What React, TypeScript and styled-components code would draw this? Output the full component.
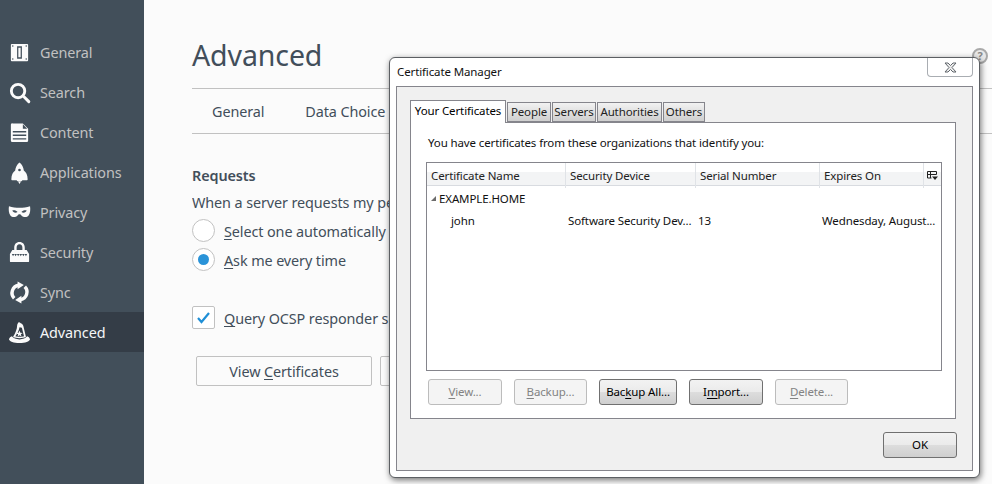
import { ReactNode } from 'react'
import styled, { createGlobalStyle } from 'styled-components'

const UI_FONT = `"Noto Sans", "Open Sans", "Liberation Sans", sans-serif`

const GlobalStyle = createGlobalStyle`
    html, body {
        margin: 0;
        padding: 0;
        background: #fbfbfb;
        font-family: ${UI_FONT};
    }
`

const icons: Record<string, ReactNode> = {
    General: (
        <path
            fillRule="evenodd"
            d="M4 3h16a1 1 0 0 1 1 1v16a1 1 0 0 1-1 1H4a1 1 0 0 1-1-1V4a1 1 0 0 1 1-1zm5.500 2.500v13h5v-13h-5zm1.300 1.500h2.400v10h-2.400V7zM5 4.500a.8.8 0 1 0 0 1.600.8.8 0 0 0 0-1.600zm14 0a.8.8 0 1 0 0 1.600.8.8 0 0 0 0-1.600zM5 18a.8.8 0 1 0 0 1.600.8.8 0 0 0 0-1.600zm14 0a.8.8 0 1 0 0 1.600.8.8 0 0 0 0-1.600z"
        />
    ),
    Search: (
        <>
            <circle cx="10.500" cy="10.500" r="7" fill="none" stroke="currentColor" strokeWidth="3" />
            <path d="M15 17l2.200-2.200 5.600 5.600a1.500 1.500 0 0 1-2.200 2.200z" />
        </>
    ),
    Content: (
        <path
            fillRule="evenodd"
            d="M5 2.500h10.500L21 8v12.500a1.500 1.500 0 0 1-1.500 1.500h-15A1.500 1.500 0 0 1 3 20.500V4A1.500 1.500 0 0 1 5 2.500zM15.500 3.500V8H20zM5 10.500v1.500h14v-1.500zm0 3.700v1.500h14v-1.500zm0 3.700v1.500h14v-1.500z"
        />
    ),
    Applications: (
        <path
            fillRule="evenodd"
            d="M12 1.500c2.500 2 4.200 5 4.500 8.500 2.300 1.700 4 4.500 4 9 0 .7-.4 1-1 1h-4.500l-.8 1H9.800l-.8-1H4.500c-.6 0-1-.3-1-1 0-4.500 1.700-7.300 4-9C7.800 6.500 9.500 3.500 12 1.500zm0 6.500a1.400 1.400 0 1 0 0 2.800 1.400 1.400 0 0 0 0-2.800zM10.500 21.500h3L12 24z"
        />
    ),
    Privacy: (
        <path
            fillRule="evenodd"
            d="M1 5.500c3.500 1.300 7.500 1.500 11 1.500s7.500-.2 11-1.500c.5 3.500.3 7-1.500 9.500-2 2.500-5.500 2-7.500 0-1-1-1-1.200-2-1.200s-1 .2-2 1.200c-2 2-5.500 2.500-7.500 0C.7 12.500.5 9 1 5.500zM4.500 10c.5 2 3.500 3 5.500 1.500C8.500 9.500 6 9.300 4.500 10zm15 0c-1.500-.7-4-.5-5.500 1.500 2 1.500 5 .5 5.500-1.500z"
        />
    ),
    Security: (
        <path
            fillRule="evenodd"
            d="M12 1c3.500 0 5.500 2.500 5.500 6v2.500h2L22 13.500V21c0 .6-.4 1-1 1H3c-.6 0-1-.4-1-1v-7.500l2.500-4h2V7c0-3.500 2-6 5.500-6zm0 2.500c-2 0-3 1.500-3 3.500v2.500h6V7c0-2-1-3.500-3-3.500zM4 13.500l1.300 2.500 1.300-2.500 1.300 2.500 1.400-2.500 1.300 2.500 1.400-2.500 1.300 2.500 1.400-2.500 1.300 2.500 1.400-2.500 1.300 2.500 1.300-2.500h-16z"
        />
    ),
    Sync: (
        <>
            <path d="M11 4.500A8 8 0 0 0 6.500 18" fill="none" stroke="currentColor" strokeWidth="3.600" />
            <path d="M13 19.500A8 8 0 0 0 17.500 6" fill="none" stroke="currentColor" strokeWidth="3.600" />
            <path d="M10 .5l6.500 3.700-6.500 4.300zM14 15.500l-6.500 4.300 6.500 3.700z" />
        </>
    ),
    Advanced: (
        <path
            fillRule="evenodd"
            d="M11.500 1c1.200 1.300 4 1.500 4.500 4.200l2.700 11.300c-1.800 1-3.900 1.500-6.700 1.500s-5-.5-6.700-1.500C7.800 13 9.500 8 9.500 5c0-1.700.8-3 2-4zm.5 5.500c-.5 3-2 6.500-4.300 9.300 1.300.5 2.700.7 4.300.7s3.200-.2 4.700-.7L14.500 7c-.7-.2-1.700-.3-2.500-.5zm0 3.500l.9 2.300 2.400.1-1.900 1.500.7 2.400-2.100-1.400-2.100 1.400.7-2.400-1.900-1.500 2.400-.1zM1 19c.5-1.500 1.700-2.500 3-3 1.500 2 4.500 3.200 8 3.200s6.500-1.200 8-3.200c1.300.5 2.500 1.500 3 3-.5 2.500-5 4-11 4s-10.500-1.500-11-4z"
        />
    ),
}

const sections = ['General', 'Search', 'Content', 'Applications', 'Privacy', 'Security', 'Sync', 'Advanced']

const columns = [
    { name: 'Certificate Name' },
    { name: 'Security Device' },
    { name: 'Serial Number' },
    { name: 'Expires On' },
]

const certTabs = [
    { name: 'Your Certificates', width: 96 },
    { name: 'People', width: 44 },
    { name: 'Servers', width: 44 },
    { name: 'Authorities', width: 65 },
    { name: 'Others', width: 42 },
]

export default function App() {
    return (
        <Page>
            <GlobalStyle />
            <Sidebar>
                {sections.map((name) => (
                    <NavItem key={name} $active={name === 'Advanced'}>
                        <NavIcon viewBox="0 0 24 24" fill="currentColor">{icons[name]}</NavIcon>
                        {name}
                    </NavItem>
                ))}
            </Sidebar>

            <Main>
                <Title>Advanced</Title>
                <PrefTabs>
                    <TabsClip>
                        <PrefTab>General</PrefTab>
                        <PrefTab>Data Choice</PrefTab>
                    </TabsClip>
                </PrefTabs>
                <Heading>Requests</Heading>
                <Description>When a server requests my pe</Description>
                <OptionRow>
                    <Radio />
                    <OptionLabel><Key>S</Key>elect one automatically</OptionLabel>
                </OptionRow>
                <OptionRow>
                    <Radio $checked />
                    <OptionLabel><Key>A</Key>sk me every time</OptionLabel>
                </OptionRow>
                <CheckRow>
                    <CheckBox>
                        <svg width="15" height="13" viewBox="0 0 15 13">
                            <path d="M2 7l3.500 4L13 2" fill="none" stroke="#1f8fd6" strokeWidth="2.200" />
                        </svg>
                    </CheckBox>
                    <OptionLabel><Key>Q</Key>uery OCSP responder se</OptionLabel>
                </CheckRow>
                <PrefButtons>
                    <PrefButton>View <Key>C</Key>ertificates</PrefButton>
                    <PrefButton />
                </PrefButtons>
            </Main>

            <HelpBadge>?</HelpBadge>

            <Dialog>
                <TitleBar>
                    <DialogTitle>Certificate Manager</DialogTitle>
                    <CloseButton>
                        <svg width="13" height="11" viewBox="0 0 13 11">
                            <path
                                d="M1 1h3l2.500 2.500L9 1h3L8 5.500l4 4.500H9L6.500 7.500 4 10H1l4-4.500z"
                                fill="#ececec"
                                stroke="#5f656b"
                            />
                        </svg>
                    </CloseButton>
                </TitleBar>
                <DialogBody>
                    <TabStrip>
                        {certTabs.map((tab, i) => (
                            <CertTab key={tab.name} $selected={i === 0} $width={tab.width}>{tab.name}</CertTab>
                        ))}
                    </TabStrip>
                    <TabPanel>
                        <Intro>You have certificates from these organizations that identify you:</Intro>
                        <Tree>
                            <TreeHeader>
                                {columns.map((col) => (
                                    <HeaderCell key={col.name}>{col.name}</HeaderCell>
                                ))}
                                <PickerCell>
                                    <svg width="11" height="11" viewBox="0 0 11 11">
                                        <path
                                            d="M.5 1.500h9M.5 1.500v6.500h4M9.500 1.500v3M.5 4.500h9M3.500 1.500v6.500"
                                            fill="none"
                                            stroke="#222"
                                        />
                                        <path d="M5 6.500h6L8 10z" fill="#222" />
                                    </svg>
                                </PickerCell>
                            </TreeHeader>
                            <TreeRow>
                                <GroupCell>
                                    <Twisty />
                                    EXAMPLE.HOME
                                </GroupCell>
                            </TreeRow>
                            <TreeRow>
                                <NameCell>john</NameCell>
                                <TreeCell>Software Security Dev...</TreeCell>
                                <TreeCell>13</TreeCell>
                                <TreeCell>Wednesday, August...</TreeCell>
                            </TreeRow>
                        </Tree>
                        <ActionRow>
                            <ActionButton $width={74} disabled><Key>V</Key>iew...</ActionButton>
                            <ActionButton $width={73} disabled><Key>B</Key>ackup...</ActionButton>
                            <ActionButton $width={78}>Bac<Key>k</Key>up All...</ActionButton>
                            <ActionButton $width={74}>I<Key>m</Key>port...</ActionButton>
                            <ActionButton $width={73} disabled><Key>D</Key>elete...</ActionButton>
                        </ActionRow>
                    </TabPanel>
                    <DialogFooter>
                        <ActionButton $width={74}>OK</ActionButton>
                    </DialogFooter>
                </DialogBody>
            </Dialog>
        </Page>
    )
}

const Page = styled.div`
    position: relative;
    display: flex;
    width: 992px;
    height: 484px;
    overflow: hidden;
    background: #fbfbfb;
    color: #424e5a;
    letter-spacing: -0.1px;
`

const Sidebar = styled.nav`
    flex: 0 0 144px;
    padding-top: 32px;
    box-sizing: border-box;
    background: #424f5a;
`

const NavItem = styled.div<{ $active?: boolean }>`
    display: flex;
    align-items: center;
    gap: 9px;
    height: 40px;
    padding-left: 8px;
    font-size: 14.400px;
    color: ${(p) => (p.$active ? '#f4f6f8' : '#c1c1c1')};
    background: ${(p) => (p.$active ? '#343d47' : 'transparent')};
`

const NavIcon = styled.svg`
    flex: none;
    width: 23px;
    height: 23px;
    color: #fbfbfb;
`

const Main = styled.main`
    flex: 1;
    min-width: 0;
    padding-left: 48px;
    white-space: nowrap;
    font-size: 14.400px;
`

const Title = styled.h1`
    height: 88px;
    margin: 0;
    padding-top: 34px;
    box-sizing: border-box;
    font-size: 28.500px;
    line-height: 42px;
    font-weight: 400;
`

const PrefTabs = styled.div`
    display: flex;
    height: 44px;
    padding-left: 20px;
    align-items: center;
    border-top: 1px solid #c1c1c1;
    border-bottom: 1px solid #c1c1c1;
`

const TabsClip = styled.div`
    display: flex;
    gap: 41px;
    width: 177px;
    overflow: hidden;
`

const PrefTab = styled.div`
    flex: none;
    font-size: 14.400px;
`

const Heading = styled.h2`
    margin: 32px 0 0;
    font-size: 14.400px;
    line-height: 20px;
    font-weight: 600;
`

const Description = styled.div`
    width: 197px;
    margin-top: 6px;
    overflow: hidden;
    line-height: 21px;
`

const OptionRow = styled.div`
    display: flex;
    align-items: center;
    gap: 9px;
    width: 197px;
    height: 23px;
    margin-top: 6px;
    overflow: hidden;
`

const OptionLabel = styled.span`
    flex: none;
    padding-top: 2px;
`

const CheckRow = styled(OptionRow)`
    margin-top: 35px;
`

const Radio = styled.span<{ $checked?: boolean }>`
    position: relative;
    flex: none;
    width: 23px;
    height: 23px;
    box-sizing: border-box;
    border: 1px solid #c1c1c1;
    border-radius: 50%;
    background: #fff;
    &::after {
        content: '';
        display: ${(p) => (p.$checked ? 'block' : 'none')};
        position: absolute;
        left: 5px;
        top: 5px;
        width: 11px;
        height: 11px;
        border-radius: 50%;
        background: #2a93d8;
    }
`

const CheckBox = styled.span`
    display: flex;
    align-items: center;
    justify-content: center;
    flex: none;
    width: 23px;
    height: 23px;
    box-sizing: border-box;
    border: 1px solid #c1c1c1;
    border-radius: 2px;
    background: #fff;
`

const Key = styled.span`
    text-decoration: underline;
    text-underline-offset: 2px;
    text-decoration-thickness: 1px;
`

const PrefButtons = styled.div`
    display: flex;
    gap: 8px;
    margin: 27px 0 0 4px;
`

const PrefButton = styled.div`
    flex: none;
    width: 176px;
    height: 30px;
    box-sizing: border-box;
    border: 1px solid #c1c1c1;
    border-radius: 2px;
    background: #fbfbfb;
    line-height: 29px;
    text-align: center;
`

const HelpBadge = styled.div`
    position: absolute;
    left: 972px;
    top: 48px;
    width: 16px;
    height: 16px;
    box-sizing: border-box;
    border: 2px solid #a9a9a9;
    border-radius: 50%;
    background: #e9e9e9;
    color: #8a8a8a;
    font-size: 11px;
    font-weight: 700;
    line-height: 12px;
    text-align: center;
`

const Dialog = styled.section`
    position: absolute;
    left: 389px;
    top: 57px;
    width: 591px;
    height: 421px;
    box-sizing: border-box;
    display: flex;
    flex-direction: column;
    padding: 0 6px 6px;
    border: 1px solid #5c5f63;
    border-radius: 6px;
    background: #fff;
    box-shadow: 1px 2px 6px rgba(0, 0, 0, 0.55);
    color: #000;
    font-size: 11.500px;
    letter-spacing: -0.12px;
`

const TitleBar = styled.header`
    flex: 0 0 28px;
    display: flex;
    justify-content: space-between;
    align-items: flex-start;
`

const DialogTitle = styled.div`
    margin: 6px 0 0 1px;
    line-height: 16px;
    color: #111;
`

const CloseButton = styled.div`
    display: flex;
    align-items: center;
    justify-content: center;
    width: 46px;
    height: 19px;
    box-sizing: border-box;
    border: 1px solid #a9adb2;
    border-top: 0;
    border-radius: 0 0 4px 4px;
    background: #fff;
`

const DialogBody = styled.div`
    flex: 1;
    display: flex;
    flex-direction: column;
    padding: 13px 16px 0 13px;
    border: 1px solid #85858c;
    background: #f0f0f0;
`

const TabStrip = styled.div`
    display: flex;
    align-items: flex-end;
    height: 22px;
    gap: 1px;
`

const CertTab = styled.div<{ $selected?: boolean; $width: number }>`
    width: ${(p) => p.$width}px;
    height: ${(p) => (p.$selected ? '23px' : '20px')};
    box-sizing: border-box;
    margin-bottom: ${(p) => (p.$selected ? '-1px' : '0')};
    position: relative;
    z-index: ${(p) => (p.$selected ? 1 : 0)};
    border: 1px solid #85858c;
    border-bottom: ${(p) => (p.$selected ? '0' : '1px solid #85858c')};
    background: ${(p) => (p.$selected ? '#fff' : 'linear-gradient(#f2f2f2, #cfcfcf)')};
    line-height: ${(p) => (p.$selected ? '19px' : '18px')};
    text-align: center;
    color: ${(p) => (p.$selected ? '#000' : '#222')};
`

const TabPanel = styled.div`
    display: flex;
    flex-direction: column;
    height: 297px;
    box-sizing: border-box;
    padding: 12px 13px 0 15px;
    border: 1px solid #85858c;
    background: #fff;
`

const Intro = styled.div`
    height: 27px;
    padding-left: 2px;
    line-height: 16px;
    color: #111;
`

const Tree = styled.div`
    height: 209px;
    box-sizing: border-box;
    border: 1px solid #85858c;
    background: #fff;
`

const TreeHeader = styled.div`
    display: grid;
    grid-template-columns: 139px 130px 124px 104px 1fr;
    height: 23px;
    box-sizing: border-box;
    border-bottom: 1px solid #d8dbe0;
    background: linear-gradient(#fff 0, #fff 40%, #f3f4f5 42%, #f3f4f5 100%);
`

const HeaderCell = styled.div`
    padding-left: 4px;
    line-height: 25px;
    border-right: 1px solid #e0e3e7;
    color: #222;
`

const PickerCell = styled.div`
    display: flex;
    align-items: center;
    justify-content: center;
`

const TreeRow = styled.div`
    display: grid;
    grid-template-columns: 139px 130px 124px 1fr;
    height: 22px;
    align-items: center;
    ${TreeHeader} + & {
        margin-top: 1px;
    }
`

const TreeCell = styled.div`
    padding-left: 2px;
    white-space: nowrap;
    color: #111;
`

const NameCell = styled(TreeCell)`
    padding-left: 24px;
`

const GroupCell = styled(TreeCell)`
    display: flex;
    align-items: center;
    gap: 3px;
    padding-left: 4px;
    grid-column: 1 / -1;
`

const Twisty = styled.span`
    width: 0;
    height: 0;
    border-left: 5px solid transparent;
    border-bottom: 5px solid #6b6b6b;
`

const ActionRow = styled.div`
    display: flex;
    gap: 12px;
    margin-top: 8px;
    padding-left: 2px;
`

const ActionButton = styled.button<{ $width: number }>`
    flex: none;
    width: ${(p) => p.$width}px;
    height: 26px;
    padding: 0 0 2px;
    border: 1px solid ${(p) => (p.disabled ? '#bcbcbc' : '#707070')};
    border-radius: 3px;
    background: ${(p) =>
        p.disabled ? '#f4f4f4' : 'linear-gradient(#f2f2f2 0, #ebebeb 48%, #dddddd 50%, #cfcfcf 100%)'};
    font-family: ${UI_FONT};
    font-size: 11.500px;
    letter-spacing: -0.12px;
    color: ${(p) => (p.disabled ? '#838383' : '#000')};
`

const DialogFooter = styled.div`
    display: flex;
    justify-content: flex-end;
    margin: 13px -1px 0 0;
`
